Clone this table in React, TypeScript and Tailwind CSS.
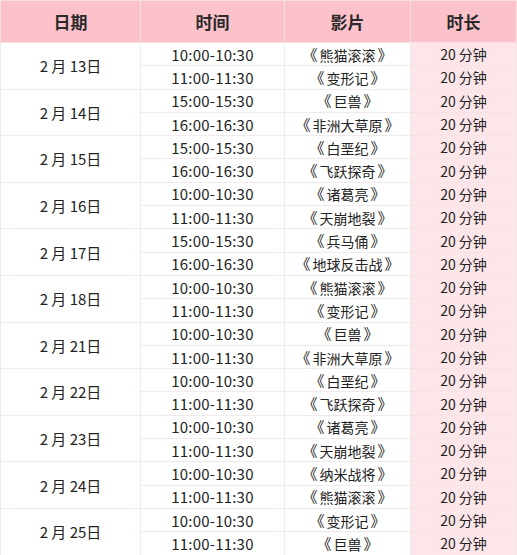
const schedule = [
  { date: "2 月 13日", shows: [["10:00-10:30", "熊猫滚滚"], ["11:00-11:30", "变形记"]] },
  { date: "2 月 14日", shows: [["15:00-15:30", "巨兽"], ["16:00-16:30", "非洲大草原"]] },
  { date: "2 月 15日", shows: [["15:00-15:30", "白垩纪"], ["16:00-16:30", "飞跃探奇"]] },
  { date: "2 月 16日", shows: [["10:00-10:30", "诸葛亮"], ["11:00-11:30", "天崩地裂"]] },
  { date: "2 月 17日", shows: [["15:00-15:30", "兵马俑"], ["16:00-16:30", "地球反击战"]] },
  { date: "2 月 18日", shows: [["10:00-10:30", "熊猫滚滚"], ["11:00-11:30", "变形记"]] },
  { date: "2 月 21日", shows: [["10:00-10:30", "巨兽"], ["11:00-11:30", "非洲大草原"]] },
  { date: "2 月 22日", shows: [["10:00-10:30", "白垩纪"], ["11:00-11:30", "飞跃探奇"]] },
  { date: "2 月 23日", shows: [["10:00-10:30", "诸葛亮"], ["11:00-11:30", "天崩地裂"]] },
  { date: "2 月 24日", shows: [["10:00-10:30", "纳米战将"], ["11:00-11:30", "熊猫滚滚"]] },
  { date: "2 月 25日", shows: [["10:00-10:30", "变形记"], ["11:00-11:30", "巨兽"]] },
];

export default function App() {
  return (
    <div className="w-[517px] h-[555px] overflow-hidden bg-white text-[#222] font-['Noto_Sans_CJK_SC',sans-serif]">
      <table className="w-full border-collapse table-fixed">
        <colgroup>
          <col className="w-[140px]" />
          <col className="w-[144px]" />
          <col className="w-[126px]" />
          <col />
        </colgroup>
        <thead>
          <tr className="h-[42px] bg-[#fcc2cc] text-[17px] font-bold text-[#2a2a2a]">
            <th className="border border-[#f7dfe3]">日期</th>
            <th className="border border-[#f7dfe3]">时间</th>
            <th className="border border-[#f7dfe3]">影片</th>
            <th className="border border-[#f7dfe3]">时长</th>
          </tr>
        </thead>
        <tbody className="text-[14px] leading-none">
          {schedule.map((g) =>
            g.shows.map(([time, film], i) => (
              <tr key={g.date + i} className="h-[23.3px]">
                {i === 0 && (
                  <td rowSpan={2} className="border border-[#f3e9eb] text-center text-[15px]">
                    {g.date}
                  </td>
                )}
                <td className="border border-[#f3e9eb] text-center text-[15px] tracking-[0.2px]">{time}</td>
                <td className="border border-[#f3e9eb] text-center">
                  <span className="mr-[2px] text-[15px]">《</span>
                  {film}
                  <span className="ml-[2px] text-[15px]">》</span>
                </td>
                <td className="border border-[#f7e3e7] bg-[#fde6ea] text-center">20 分钟</td>
              </tr>
            ))
          )}
        </tbody>
      </table>
    </div>
  );
}
